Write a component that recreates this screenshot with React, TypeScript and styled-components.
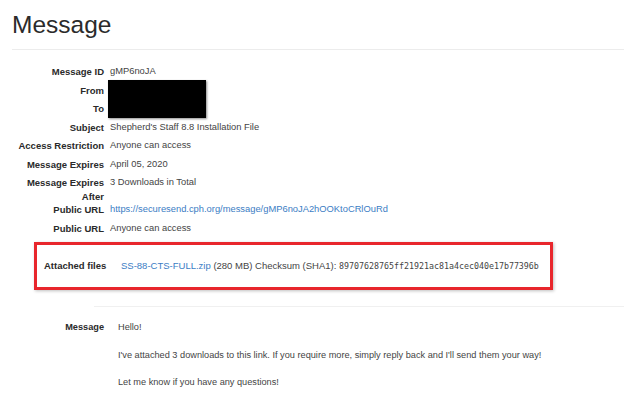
import React from "react";
import styled, { createGlobalStyle } from "styled-components";

const Global = createGlobalStyle`
  html, body { margin: 0; padding: 0; background: #fff; }
  body { font-family: "Liberation Sans", Arial, sans-serif; color: #333; }
`;

const Page = styled.div`
  width: 624px;
  height: 402px;
  overflow: hidden;
  padding-left: 12px;
  box-sizing: border-box;
`;

const Header = styled.div`
  padding-top: 11px;
  padding-bottom: 11px;
  border-bottom: 1px solid #ececec;
`;

const Title = styled.h1`
  margin: 0;
  font-size: 24.5px;
  line-height: 27px;
  font-weight: 400;
  color: #2b2b2b;
`;

const DetailList = styled.dl`
  margin: 15px 0 0 0;
  display: grid;
  grid-template-columns: 92px 1fr;
  column-gap: 6px;
  font-size: 9.5px;
  line-height: 13.5px;
`;

const Label = styled.dt`
  font-weight: 700;
  text-align: right;
  color: #2a2a2a;
`;

const Value = styled.dd`
  margin: 0;
  padding-bottom: 5px;
  color: #444;
  font-size: 9.35px;
  position: relative;
`;

const Link = styled.a`
  color: #3b7dc4;
  text-decoration: none;
`;

const Redaction = styled.div`
  position: absolute;
  left: -2px;
  top: -4px;
  width: 98px;
  height: 38px;
  background: #000;
  box-shadow: 1px 1px 2px rgba(0, 0, 0, 0.45);
`;

const Highlight = styled.div`
  margin: 2px 0 0 22px;
  width: 519px;
  height: 48px;
  box-sizing: border-box;
  border: 3px solid #e8262c;
  box-shadow: 1px 1px 3px rgba(0, 0, 0, 0.25);
  display: grid;
  grid-template-columns: 77px 1fr;
  align-items: center;
  padding: 0 0 0 7px;
  font-size: 9.5px;
  line-height: 13.5px;
`;

const AttachLabel = styled.span`
  font-weight: 700;
  color: #2a2a2a;
`;

const AttachValue = styled.span`
  color: #444;
  white-space: nowrap;
`;

const Hash = styled.code`
  font-family: "DejaVu Sans Mono", "Liberation Mono", monospace;
  font-size: 8.3px;
  color: #444;
`;

const MessageSection = styled.div`
  margin: 16px 0 0 82px;
  border-top: 1px solid #f0f0f0;
  padding-top: 14px;
  display: grid;
  grid-template-columns: 10px 1fr;
  column-gap: 14px;
  font-size: 9.2px;
  line-height: 13.5px;
`;

const MessageBody = styled.div`
  color: #444;
`;

const Paragraph = styled.p`
  margin: 0 0 14px 0;
`;

const MessageLabel = styled.span`
  font-weight: 700;
  text-align: right;
  color: #2a2a2a;
  white-space: nowrap;
  direction: rtl;
`;

const rows: { label: React.ReactNode; value: React.ReactNode }[] = [
  { label: "Message ID", value: "gMP6noJA" },
  { label: "From", value: <>{"\u00a0"}<Redaction /></> },
  { label: "To", value: "\u00a0" },
  { label: "Subject", value: "Shepherd's Staff 8.8 Installation File" },
  { label: "Access Restriction", value: "Anyone can access" },
  { label: "Message Expires", value: "April 05, 2020" },
  { label: <>Message Expires<br />After</>, value: "3 Downloads in Total" },
  {
    label: "Public URL",
    value: (
      <Link href="#">https://securesend.cph.org/message/gMP6noJA2hOOKtoCRlOuRd</Link>
    ),
  },
  { label: "Public URL", value: "Anyone can access" },
];

export default function App() {
  return (
    <>
      <Global />
      <Page>
        <Header>
          <Title>Message</Title>
        </Header>
        <DetailList>
          {rows.map((r, i) => (
            <React.Fragment key={i}>
              <Label>{r.label}</Label>
              <Value>{r.value}</Value>
            </React.Fragment>
          ))}
        </DetailList>
        <Highlight>
          <AttachLabel>Attached files</AttachLabel>
          <AttachValue>
            <Link href="#">SS-88-CTS-FULL.zip</Link> (280 MB) Checksum (SHA1):{" "}
            <Hash>89707628765ff21921ac81a4cec040e17b77396b</Hash>
          </AttachValue>
        </Highlight>
        <MessageSection>
          <MessageLabel>Message</MessageLabel>
          <MessageBody>
            <Paragraph>Hello!</Paragraph>
            <Paragraph>
              I've attached 3 downloads to this link. If you require more, simply reply back and
              I'll send them your way!
            </Paragraph>
            <Paragraph>Let me know if you have any questions!</Paragraph>
          </MessageBody>
        </MessageSection>
      </Page>
    </>
  );
}
